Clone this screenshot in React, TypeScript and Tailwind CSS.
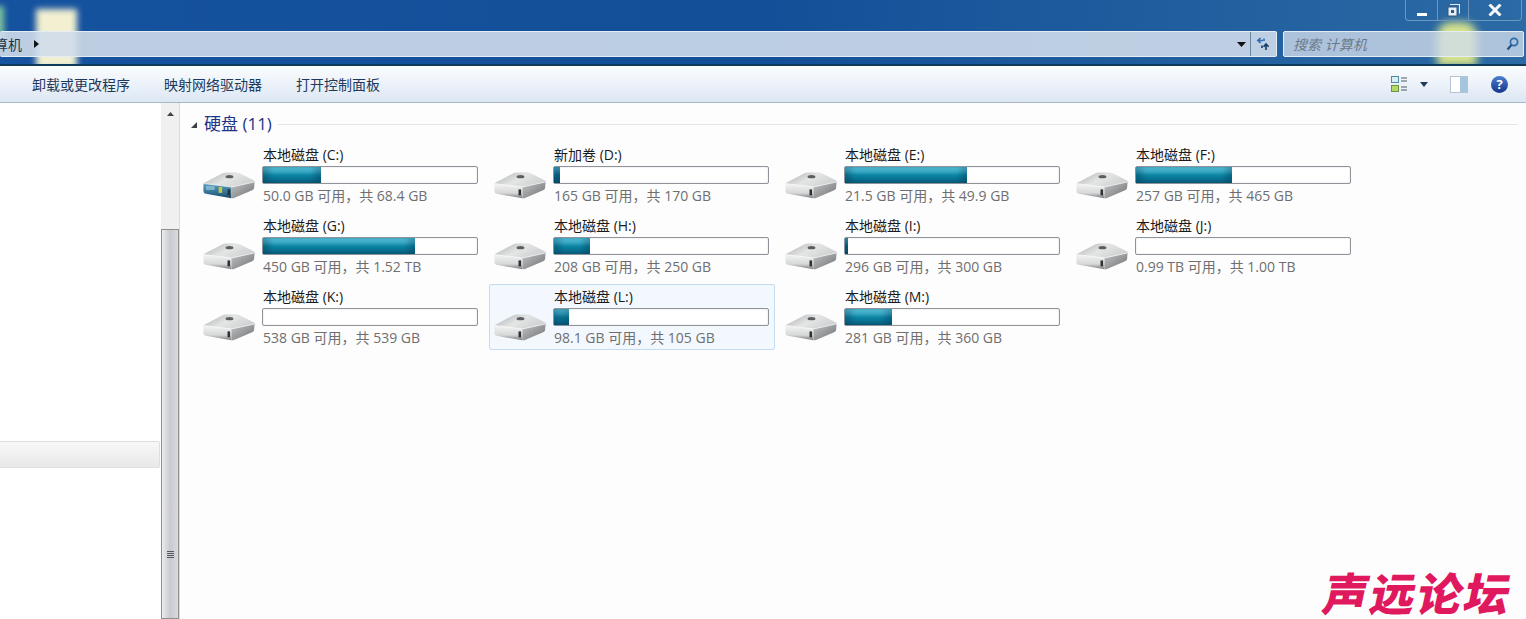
const font = { fontFamily: '"Open Sans", "Noto Sans CJK SC", sans-serif' };

interface Drive {
  name: string;
  used: number; // percentage
  info: string;
  system?: boolean;
  hover?: boolean;
}

const drives: Drive[] = [
  { name: '本地磁盘 (C:)', used: 27, info: '50.0 GB 可用，共 68.4 GB', system: true },
  { name: '新加卷 (D:)', used: 3, info: '165 GB 可用，共 170 GB' },
  { name: '本地磁盘 (E:)', used: 57, info: '21.5 GB 可用，共 49.9 GB' },
  { name: '本地磁盘 (F:)', used: 45, info: '257 GB 可用，共 465 GB' },
  { name: '本地磁盘 (G:)', used: 71, info: '450 GB 可用，共 1.52 TB' },
  { name: '本地磁盘 (H:)', used: 17, info: '208 GB 可用，共 250 GB' },
  { name: '本地磁盘 (I:)', used: 1.4, info: '296 GB 可用，共 300 GB' },
  { name: '本地磁盘 (J:)', used: 0, info: '0.99 TB 可用，共 1.00 TB' },
  { name: '本地磁盘 (K:)', used: 0, info: '538 GB 可用，共 539 GB' },
  { name: '本地磁盘 (L:)', used: 7, info: '98.1 GB 可用，共 105 GB', hover: true },
  { name: '本地磁盘 (M:)', used: 22, info: '281 GB 可用，共 360 GB' },
];

function DriveIcon({ system, id }: { system?: boolean; id: string }) {
  return (
    <svg width="61" height="32" viewBox="0 0 62 32" className="shrink-0">
      <defs>
        <linearGradient id={`top-${id}`} x1="0" y1="0" x2="1" y2="0.5">
          <stop offset="0" stopColor="#a9abad" />
          <stop offset="0.55" stopColor="#e4e5e5" />
          <stop offset="1" stopColor="#cfd1d2" />
        </linearGradient>
        <linearGradient id={`front-${id}`} x1="0" y1="0" x2="0" y2="1">
          <stop offset="0" stopColor={system ? '#5d9dbb' : '#f4f4f4'} />
          <stop offset="0.65" stopColor={system ? '#2f6f92' : '#d6d7d8'} />
          <stop offset="1" stopColor={system ? '#163f5c' : '#77787a'} />
        </linearGradient>
        <linearGradient id={`side-${id}`} x1="0" y1="0" x2="1" y2="1">
          <stop offset="0" stopColor="#c2c3c5" />
          <stop offset="1" stopColor="#6f7173" />
        </linearGradient>
      </defs>
      <path d="M6 14 L24 4.5 Q26 3.4 29 3.4 H39 Q41 3.4 43 4.4 L57 11.5 Q58.5 12.6 57 13.4 L34 18 L7 15.4 Q5 15 6 14 Z" fill={`url(#top-${id})`} />
      <path d="M5.5 14.5 L34 18 L34 29.5 L8 25 Q5.5 24.4 5.5 22 Z" fill={`url(#front-${id})`} />
      <path d="M34 18 L57.5 13 L57 19 Q57 20.5 55 21.4 L36 29.4 L34 29.5 Z" fill={`url(#side-${id})`} />
      <path d="M6 14.6 L34 18 L57 13" fill="none" stroke="#fbfbfb" strokeWidth="0.7" />
      <ellipse cx="32" cy="7.5" rx="4" ry="1.7" fill="#5b5e61" />
      <rect x="30" y="20.5" width="2.6" height="6" fill="#2d2f30" />
      {system && <rect x="21" y="18" width="3.5" height="6" fill="#c8c83c" />}
      {system && <rect x="8" y="17" width="9" height="4" fill="#7fb6cf" />}
    </svg>
  );
}

function DriveItem({ drive, id }: { drive: Drive; id: string }) {
  return (
    <div
      className={`flex h-[66px] w-[286px] rounded-[2px] border ${
        drive.hover ? 'border-[#c4dcf3] bg-[#f2f8fe]' : 'border-transparent'
      }`}
    >
      <div className="-ml-[1px] pt-[26px]">
        <DriveIcon system={drive.system} id={id} />
      </div>
      <div className="ml-[3px] flex w-[216px] flex-col">
        <div className="ml-[1px] h-[23px] text-[14px] leading-[23px] text-[#1a1a1a]">{drive.name}</div>
        <div className="h-[18px] w-[216px] rounded-[2px] border border-[#8e9499] bg-white shadow-[inset_0_0_2px_#d8d8d8]">
          <div
            className="h-full bg-gradient-to-b from-[#5ad2ea] from-10% via-[#0b86a5] via-50% to-[#0b6a8a] shadow-[inset_6px_0_6px_rgba(0,40,70,0.3),inset_-6px_0_6px_rgba(0,40,70,0.3)]"
            style={{ width: `${drive.used}%` }}
          />
        </div>
        <div className="ml-[1px] mt-[2px] text-[14px] leading-[20px] whitespace-nowrap text-[#6f6f6f]">{drive.info}</div>
      </div>
    </div>
  );
}

function HeaderChrome() {
  return (
    <div className="relative h-[66px] shrink-0 overflow-hidden border-b-2 border-[#0e3a5c] bg-gradient-to-r from-[#15529f] via-[#134f98] to-[#2b6aa4]">
      {/* wallpaper showing through the glass */}
      <div className="absolute left-[36px] top-[9px] h-[60px] w-[41px] bg-[#f2f0d0] blur-[3px]" />
      <div className="absolute left-[-6px] top-[6px] h-[40px] w-[10px] bg-[#7fc4a0] blur-[3px]" />
      <div className="absolute left-[1437px] top-[22px] h-[44px] w-[40px] rounded-t-[14px] bg-[#d8e48c] blur-[4px]" />

      <div className="relative flex h-[31px] justify-end pr-[4px]">
        <div className="flex h-[21px] w-[117px] rounded-b-[4px] border border-t-0 border-[#6f96bd] text-white">
          <div className="flex w-[32px] items-end justify-center border-r border-[#6f96bd] pb-[4px]">
            <div className="h-[3px] w-[10px] bg-white" />
          </div>
          <div className="flex w-[31px] items-center justify-center border-r border-[#6f96bd]">
            <svg width="13" height="13" viewBox="0 0 13 13">
              <path d="M3 0.5h9.5v9" fill="none" stroke="#dfe8f2" strokeWidth="1.2" />
              <rect x="1" y="3" width="9" height="9" fill="#e8eef5" stroke="#33597f" />
              <rect x="4" y="6" width="3" height="3" fill="#33597f" />
            </svg>
          </div>
          <div className="flex flex-1 items-center justify-center">
            <svg width="14" height="12" viewBox="0 0 14 12">
              <path d="M1.5 0.5 L12.5 11.5 M12.5 0.5 L1.5 11.5" stroke="#f5f7fa" strokeWidth="3" />
            </svg>
          </div>
        </div>
      </div>

      <div className="relative flex h-[26px] gap-[6px] pr-[2px]">
        <div className="flex flex-1 items-center rounded-[2px] border-y border-r border-[#e4edf6] bg-[#cfdbea]/90">
          <div className="-ml-[20px] text-[14px] text-[#22344a]">计算机</div>
          <svg width="5" height="8" viewBox="0 0 5 8" className="ml-[12px]">
            <path d="M0 0 L5 4 L0 8 Z" fill="#111" />
          </svg>
          <div className="flex-1" />
          <svg width="9" height="5" viewBox="0 0 9 5" className="mr-[4px]">
            <path d="M0 0 H9 L4.5 5 Z" fill="#111" />
          </svg>
          <div className="flex h-full w-[26px] items-center justify-center border-l border-[#6b86a3]">
            <svg width="15" height="14" viewBox="0 0 15 14" fill="none" strokeWidth="1.6">
              <path d="M7 3.5 H3 M4.6 1 L1.8 3.5 L4.6 6" stroke="#2c6fb3" />
              <path d="M8 1.5 V4" stroke="#2c6fb3" />
              <path d="M10 8 V13 M7.6 9.8 L10 7 L12.6 9.8" stroke="#153d66" />
              <path d="M6 8.5 V11" stroke="#153d66" />
            </svg>
          </div>
        </div>
        <div className="flex w-[241px] items-center rounded-[2px] border border-[#e4edf6] bg-[#cfdbea]/80 pl-[9px] pr-[4px]">
          <span className="flex-1 text-[14px] italic text-[#6c7a8a]">搜索 计算机</span>
          <svg width="13" height="14" viewBox="0 0 13 14" fill="none">
            <circle cx="8" cy="5" r="3.6" stroke="#2b6cab" strokeWidth="1.7" />
            <path d="M5.4 8 L1.5 12.5" stroke="#1e4f85" strokeWidth="2.2" />
          </svg>
        </div>
      </div>
    </div>
  );
}

function Toolbar() {
  return (
    <div className="flex h-[37px] shrink-0 items-center border-b border-[#a9b8c8] bg-gradient-to-b from-[#fbfdfe] to-[#dce7f4] pl-[32px] pr-[18px] text-[14px] text-[#1e395b]">
      <div className="flex flex-1 gap-[34px]">
        <span>卸载或更改程序</span>
        <span>映射网络驱动器</span>
        <span>打开控制面板</span>
      </div>
      <svg width="16" height="17" viewBox="0 0 16 17" fill="none">
        <rect x="0.5" y="0.5" width="7" height="6" fill="#d9eef2" stroke="#4f8aa8" />
        <rect x="0.5" y="9.5" width="7" height="6" fill="#b5d86a" stroke="#6e9440" />
        <path d="M10 2 H16 M10 5 H16 M10 11 H16 M10 14 H16" stroke="#4d5a66" />
      </svg>
      <svg width="8" height="5" viewBox="0 0 8 5" className="ml-[13px]">
        <path d="M0 0 H8 L4 5 Z" fill="#1e395b" />
      </svg>
      <div className="ml-[22px] h-[17px] w-[18px] border border-[#b5c4d3] bg-gradient-to-r from-white from-55% to-[#a3c6de] to-55%" />
      <div className="ml-[23px] flex h-[17px] w-[17px] items-center justify-center rounded-full bg-gradient-to-b from-[#4f7fd0] to-[#14358c] text-[13px] font-bold leading-none text-white">
        ?
      </div>
    </div>
  );
}

function Scrollbar() {
  return (
    <div className="flex w-[19px] shrink-0 flex-col border-r border-[#d5dde3] bg-[#f0f0f0]">
      <div className="flex h-[126px] shrink-0 justify-center pt-[9px]">
        <svg width="7" height="4" viewBox="0 0 7 4">
          <path d="M3.5 0 L7 4 H0 Z" fill="#444" />
        </svg>
      </div>
      <div className="flex flex-1 items-start justify-center border border-[#8e8f8f] bg-gradient-to-r from-[#ececee] via-[#c9cacf] to-[#d9dade] pt-[321px]">
        <div className="flex w-[7px] flex-col gap-[1px]">
          <div className="h-[1px] bg-[#55585c]" />
          <div className="h-[1px] bg-[#55585c]" />
          <div className="h-[1px] bg-[#55585c]" />
          <div className="h-[1px] bg-[#55585c]" />
        </div>
      </div>
    </div>
  );
}

export default function App() {
  return (
    <div className="relative flex h-[619px] w-[1526px] flex-col overflow-hidden bg-[#fdfdfe]" style={font}>
      <HeaderChrome />
      <Toolbar />
      <div className="flex min-h-0 flex-1">
        <div className="w-[161px] shrink-0 bg-white pt-[338px]">
          <div className="h-[27px] w-[160px] rounded-r-[2px] border border-l-0 border-[#dedede] bg-gradient-to-b from-[#f8f8f8] to-[#e8e8e8]" />
        </div>
        <Scrollbar />
        <div className="flex-1 pl-[11px] pr-[8px]">
          <div className="flex h-[39px] items-center pt-[3px]">
            <svg width="6" height="6" viewBox="0 0 6 6" className="mt-[2px]">
              <path d="M6 0 V6 H0 Z" fill="#3a3f45" />
            </svg>
            <span className="ml-[7px] text-[17px] text-[#1e3287]">硬盘 (11)</span>
            <div className="ml-[6px] h-[1px] flex-1 bg-[#e2e6ea]" />
          </div>
          <div className="grid grid-cols-[repeat(4,286px)] gap-[5px] pl-[7px]">
            {drives.map((d, i) => (
              <DriveItem key={d.name} drive={d} id={String(i)} />
            ))}
          </div>
        </div>
      </div>
      {/* forum watermark */}
      <div className="absolute bottom-[1px] right-[14px] -skew-x-12 text-[45px] font-black leading-[48px] tracking-[2px] text-[#e0195f]">
        声远论坛
      </div>
    </div>
  );
}
